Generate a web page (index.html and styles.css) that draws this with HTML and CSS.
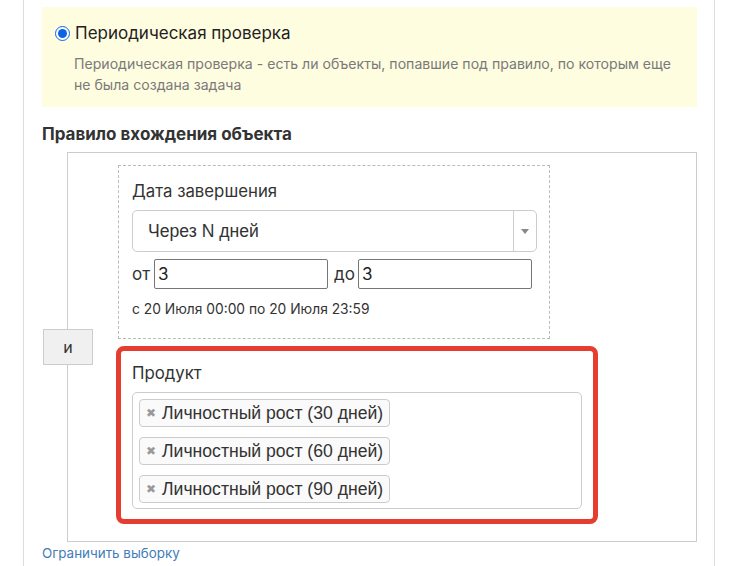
FILE: index.html
```html
<!DOCTYPE html>
<html lang="ru">
<head>
<meta charset="utf-8">
<link rel="stylesheet" href="styles.css">
</head>
<body>
<div class="page">
  <div class="notice">
    <label class="notice-title">
      <input type="radio" class="radio" checked>
      <span>Периодическая проверка</span>
    </label>
    <p class="notice-desc">Периодическая проверка - есть ли объекты, попавшие под правило, по которым еще не была создана задача</p>
  </div>

  <h3 class="section-title">Правило вхождения объекта</h3>

  <div class="rule">
    <div class="op-btn">и</div>

    <div class="cond">
      <div class="field-label">Дата завершения</div>
      <div class="select">
        <span class="select-text">Через N дней</span>
        <span class="select-arrow"></span>
      </div>
      <div class="range">
        <span class="range-label">от</span>
        <span class="num-input">3</span>
        <span class="range-label range-label-to">до</span>
        <span class="num-input">3</span>
      </div>
      <div class="date-hint">с 20 Июля 00:00 по 20 Июля 23:59</div>
    </div>

    <div class="cond cond-highlight">
      <div class="field-label">Продукт</div>
      <div class="multi">
        <span class="tag"><span class="tag-x">✖</span>Личностный рост (30 дней)</span>
        <span class="tag"><span class="tag-x">✖</span>Личностный рост (60 дней)</span>
        <span class="tag"><span class="tag-x">✖</span>Личностный рост (90 дней)</span>
      </div>
    </div>
  </div>

  <a class="limit-link" href="#">Ограничить выборку</a>
</div>
</body>
</html>
```

FILE: styles.css
```css
html, body {
  margin: 0;
  padding: 0;
  background: #ffffff;
}

body {
  font-family: Inter, "Noto Sans", sans-serif;
  color: #222;
}

.page {
  margin-left: 23px;
  width: 655px;
  min-height: 566px;
  box-sizing: content-box;
  border-left: 1px solid #dddddd;
  border-right: 1px solid #dddddd;
  padding: 7px 17px 0 18px;
}

.notice {
  background: #fffde0;
  padding: 15px 14px 12px 13px;
}

.notice-title {
  display: flex;
  align-items: center;
  gap: 5px;
  font-size: 17px;
  line-height: 22px;
  color: #222;
}

.radio {
  width: 15px;
  height: 15px;
  margin: 0;
  accent-color: #0b63e6;
}

.notice-desc {
  margin: 9px 0 0 19px;
  font-size: 14.1px;
  line-height: 21px;
  color: #7a7a7a;
}

.section-title {
  margin: 17px 0 8px 0;
  font-size: 17px;
  line-height: 20px;
  font-weight: 700;
  color: #333;
}

.rule {
  position: relative;
  margin-left: 25px;
  width: 630px;
  border: 1px solid #cccccc;
  padding: 12px 0 17px 50px;
  box-sizing: border-box;
}

.op-btn {
  position: absolute;
  left: -25px;
  top: 176px;
  width: 48px;
  height: 34px;
  background: #f0f0f0;
  border: 1px solid #cccccc;
  display: flex;
  align-items: center;
  justify-content: center;
  font-size: 16px;
  color: #333;
}

.cond {
  width: 432px;
  box-sizing: border-box;
  border: 1px dashed #bbbbbb;
  padding: 15px 12px 20px 13px;
}

.field-label {
  font-size: 16.8px;
  line-height: 20px;
  color: #333;
}

.select {
  margin-top: 9px;
  width: 405px;
  height: 42px;
  box-sizing: border-box;
  border: 1px solid #cccccc;
  border-radius: 5px;
  display: flex;
  align-items: center;
  font-family: "Liberation Sans", Arial, sans-serif;
  font-size: 17.6px;
  color: #333;
}

.select-text {
  flex: 1;
  padding-left: 15px;
}

.select-arrow {
  width: 22px;
  height: 100%;
  border-left: 1px solid #cccccc;
  display: flex;
  align-items: center;
  justify-content: center;
}

.select-arrow::after {
  content: "";
  width: 0;
  height: 0;
  border-left: 4px solid transparent;
  border-right: 4px solid transparent;
  border-top: 5px solid #888;
}

.range {
  margin-top: 7px;
  display: flex;
  align-items: center;
}

.range-label {
  font-size: 17px;
  color: #333;
  width: 22px;
}

.range-label-to {
  margin-left: 6px;
  width: 24px;
}

.num-input {
  width: 174px;
  height: 30px;
  box-sizing: border-box;
  border: 1px solid #767676;
  border-radius: 2px;
  padding-left: 3px;
  font-size: 17px;
  line-height: 28px;
  color: #222;
}

.date-hint {
  margin-top: 11px;
  font-size: 13.8px;
  line-height: 18px;
  color: #333;
}

.cond-highlight {
  margin-top: 7px;
  margin-left: -2px;
  width: 482px;
  border: 5px solid #e53d30;
  border-radius: 8px;
  padding: 12px 11px 10px 11px;
}

.multi {
  margin-top: 9px;
  width: 450px;
  box-sizing: border-box;
  border: 1px solid #cccccc;
  border-radius: 5px;
  padding: 6px 6px 5px 6px;
  display: flex;
  flex-direction: column;
  align-items: flex-start;
  gap: 10px;
}

.tag {
  height: 28px;
  box-sizing: border-box;
  border: 1px solid #cccccc;
  border-radius: 4px;
  background: #fafafa;
  padding: 0 6px 0 6px;
  display: flex;
  align-items: center;
  font-family: "Liberation Sans", Arial, sans-serif;
  font-size: 17.6px;
  color: #333;
}

.tag-x {
  font-family: "DejaVu Sans", sans-serif;
  color: #999;
  font-size: 12px;
  margin-right: 6px;
}

.limit-link {
  display: block;
  margin-top: 1px;
  font-size: 13.4px;
  line-height: 20px;
  color: #3f7cb9;
  text-decoration: none;
}
```
